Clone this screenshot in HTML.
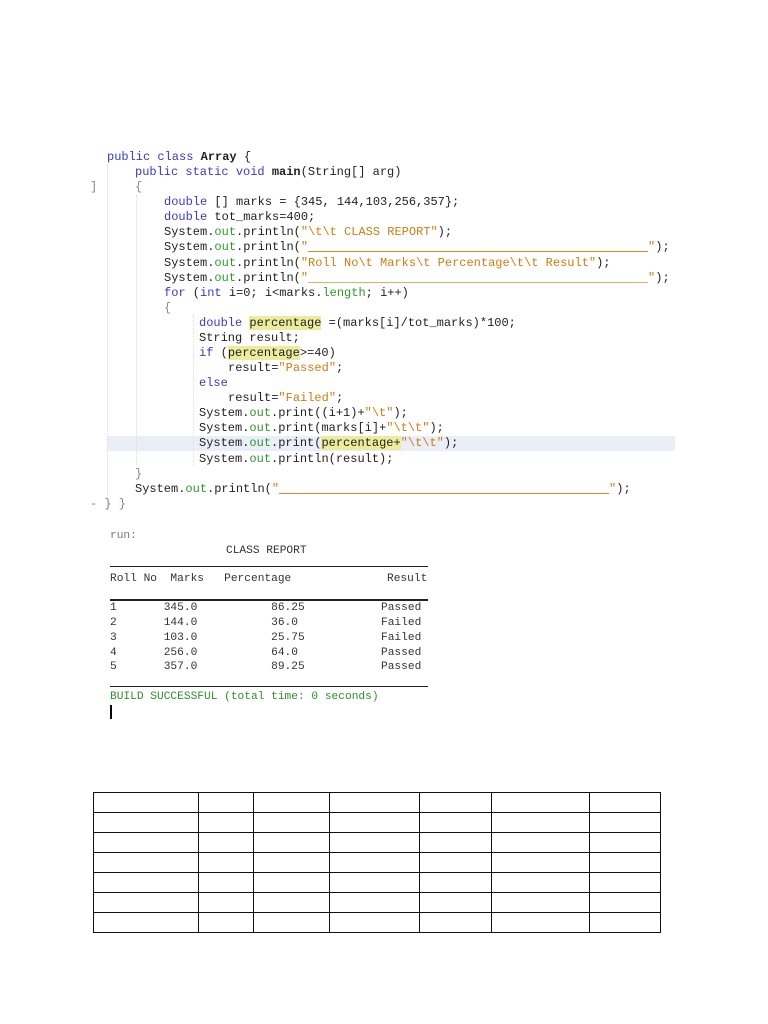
<!DOCTYPE html>
<html><head><meta charset="utf-8"><style>
body{margin:0;background:#fff;width:768px;height:1024px;position:relative;overflow:hidden}
.l{position:absolute;font-family:"Liberation Mono",monospace;font-size:12px;line-height:15px;white-space:pre;color:#222;height:15px}
.k{color:#3a3ac8}.s{color:#d07c10}.g{color:#2e9a2e}.b{font-weight:bold}
.hl{background:#ecec9c}
.u{display:inline-block;border-bottom:1.5px solid #d98a20;height:11px;vertical-align:top}
.o{position:absolute;font-family:"Liberation Mono",monospace;font-size:11.2px;line-height:14px;white-space:pre;color:#333}
.r{position:absolute;left:110px;width:318px;border-top:1.5px solid #222}
.gd{position:absolute;border-left:1px dotted #ddd}
table{position:absolute;left:93px;top:792px;border-collapse:collapse}
td{border:1.5px solid #111;height:19px;padding:0;box-sizing:content-box}
</style></head><body>
<div style="position:absolute;left:107px;top:436px;width:568px;height:15px;background:#e9eef7"></div>
<div class="gd" style="left:107px;top:165px;height:345px"></div>
<div class="gd" style="left:136px;top:195px;height:270px"></div>
<div class="gd" style="left:193px;top:315px;height:150px"></div>
<div class="l" style="left:107px;top:150px"><span class="k">public class</span> <span class="b">Array</span> {</div>
<div class="l" style="left:135px;top:165px"><span class="k">public static void</span> <span class="b">main</span>(String[] arg)</div>
<div class="l" style="left:90px;top:180px;color:#888">]</div>
<div class="l" style="left:135px;top:180px;color:#888">{</div>
<div class="l" style="left:164px;top:195px"><span class="k">double</span> [] marks = {345, 144,103,256,357};</div>
<div class="l" style="left:164px;top:210px"><span class="k">double</span> tot_marks=400;</div>
<div class="l" style="left:164px;top:225px">System.<span class="g">out</span>.println(<span class="s">"\t\t CLASS REPORT"</span>);</div>
<div class="l" style="left:164px;top:240px">System.<span class="g">out</span>.println(<span class="s">"<span class="u" style="width:340px"></span>"</span>);</div>
<div class="l" style="left:164px;top:256px">System.<span class="g">out</span>.println(<span class="s">"Roll No\t Marks\t Percentage\t\t Result"</span>);</div>
<div class="l" style="left:164px;top:271px">System.<span class="g">out</span>.println(<span class="s">"<span class="u" style="width:340px;border-color:#e0b070"></span>"</span>);</div>
<div class="l" style="left:164px;top:286px"><span class="k">for</span> (<span class="k">int</span> i=0; i&lt;marks.<span class="g">length</span>; i++)</div>
<div class="l" style="left:164px;top:301px;color:#888">{</div>
<div class="l" style="left:199px;top:316px"><span class="k">double</span> <span class="hl">percentage</span> =(marks[i]/tot_marks)*100;</div>
<div class="l" style="left:199px;top:331px">String result;</div>
<div class="l" style="left:199px;top:346px"><span class="k">if</span> (<span class="hl">percentage</span>&gt;=40)</div>
<div class="l" style="left:228px;top:361px">result=<span class="s">"Passed"</span>;</div>
<div class="l" style="left:199px;top:376px"><span class="k">else</span></div>
<div class="l" style="left:228px;top:391px">result=<span class="s">"Failed"</span>;</div>
<div class="l" style="left:199px;top:406px">System.<span class="g">out</span>.print((i+1)+<span class="s">"\t"</span>);</div>
<div class="l" style="left:199px;top:421px">System.<span class="g">out</span>.print(marks[i]+<span class="s">"\t\t"</span>);</div>
<div class="l" style="left:199px;top:436px">System.<span class="g">out</span>.print(<span class="hl">percentage+</span><span class="s">"\t\t"</span>);</div>
<div class="l" style="left:199px;top:452px">System.<span class="g">out</span>.println(result);</div>
<div class="l" style="left:135px;top:467px;color:#888">}</div>
<div class="l" style="left:135px;top:482px">System.<span class="g">out</span>.println(<span class="s">"<span class="u" style="width:330px"></span>"</span>);</div>
<div class="l" style="left:90px;top:497px;color:#888">- } }</div>

<div class="o" style="left:110px;top:529px;color:#777">run:</div>
<div class="o" style="left:226px;top:544px">CLASS REPORT</div>
<div class="r" style="top:566px"></div>
<div class="o" style="left:110px;top:572px">Roll No  Marks   Percentage</div>
<div class="o" style="left:387px;top:572px">Result</div>
<div class="r" style="top:599px;border-top-width:2px"></div>
<div class="o" style="left:110px;top:601px">1       345.0           86.25</div>
<div class="o" style="left:110px;top:616px">2       144.0           36.0</div>
<div class="o" style="left:110px;top:631px">3       103.0           25.75</div>
<div class="o" style="left:110px;top:646px">4       256.0           64.0</div>
<div class="o" style="left:110px;top:660px">5       357.0           89.25</div>
<div class="o" style="left:381px;top:601px">Passed</div>
<div class="o" style="left:381px;top:616px">Failed</div>
<div class="o" style="left:381px;top:631px">Failed</div>
<div class="o" style="left:381px;top:646px">Passed</div>
<div class="o" style="left:381px;top:660px">Passed</div>
<div class="r" style="top:686px"></div>
<div class="o" style="left:110px;top:690px;color:#2e8e2e">BUILD SUCCESSFUL (total time: 0 seconds)</div>
<div style="position:absolute;left:110px;top:705px;width:2px;height:14px;background:#000"></div>

<table>
<tr><td style="width:104px"></td><td style="width:54px"></td><td style="width:75px"></td><td style="width:89px"></td><td style="width:71px"></td><td style="width:97px"></td><td style="width:70px"></td></tr>
<tr><td></td><td></td><td></td><td></td><td></td><td></td><td></td></tr>
<tr><td></td><td></td><td></td><td></td><td></td><td></td><td></td></tr>
<tr><td></td><td></td><td></td><td></td><td></td><td></td><td></td></tr>
<tr><td></td><td></td><td></td><td></td><td></td><td></td><td></td></tr>
<tr><td></td><td></td><td></td><td></td><td></td><td></td><td></td></tr>
<tr><td></td><td></td><td></td><td></td><td></td><td></td><td></td></tr>
</table>
</body></html>
